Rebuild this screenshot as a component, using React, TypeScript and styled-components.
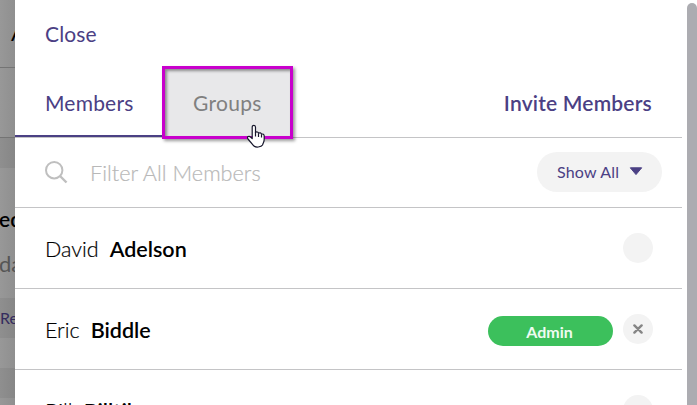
import React from "react";
import styled, { createGlobalStyle } from "styled-components";

const GlobalStyle = createGlobalStyle`
  *, *::before, *::after { box-sizing: border-box; }
  body { margin: 0; overflow: hidden; font-family: Lato, "Liberation Sans", sans-serif; background: #fff; }
  button { font: inherit; border: 0; background: none; padding: 0; }
`;

const Screen = styled.div`
  display: flex;
  width: 697px;
  height: 405px;
  overflow: hidden;
  background: #fff;
`;

const PageBehind = styled.aside`
  flex: 0 0 15px;
  overflow: hidden;
  white-space: nowrap;
  background: linear-gradient(90deg, #989898, #8f8f8f);
`;

const BehindBand = styled.div<{ $h: number; $dark?: boolean; $line?: boolean }>`
  height: ${(p) => p.$h}px;
  overflow: hidden;
  background: ${(p) => (p.$dark ? "linear-gradient(90deg, #8f8f8f, #868686)" : "none")};
  border-bottom: ${(p) => (p.$line ? "1px solid #747474" : "0")};
`;

const BehindText = styled.div<{ $top: number; $left: number; $color: string; $size: number; $weight: number }>`
  padding-top: ${(p) => p.$top}px;
  margin-left: ${(p) => p.$left}px;
  color: ${(p) => p.$color};
  font-size: ${(p) => p.$size}px;
  font-weight: ${(p) => p.$weight};
  line-height: 24px;
`;

const Drawer = styled.main`
  flex: 0 0 667px;
  overflow: hidden;
`;

const TopBar = styled.header`
  height: 67px;
  padding: 20px 0 0 30px;
`;

const TextButton = styled.button<{ $strong?: boolean; $spacing?: number }>`
  display: block;
  color: #4b4084;
  font-size: 21px;
  line-height: 28px;
  font-weight: ${(p) => (p.$strong ? 600 : 400)};
  letter-spacing: ${(p) => p.$spacing ?? 0}px;
`;

const TabBar = styled.nav`
  display: flex;
  height: 71px;
  border-bottom: 1px solid #c4c4c6;
`;

const Tab = styled.button<{ $active?: boolean }>`
  width: ${(p) => (p.$active ? 147 : 131)}px;
  height: 70px;
  padding: 3px 0 0 ${(p) => (p.$active ? 30 : 28)}px;
  text-align: left;
  color: ${(p) => (p.$active ? "#4b4084" : "#808080")};
  font-size: 21px;
  letter-spacing: 0.2px;
  border-bottom: ${(p) => (p.$active ? "2px solid #4b4084" : "0")};
`;

const HighlightedTab = styled(Tab)`
  position: relative;
  height: 73px;
  margin-top: -1px;
  padding-top: 0;
  letter-spacing: 0.3px;
  background: #e8e8ea;
  border: 3px solid #c800cc;
  box-shadow: 2px 2px 3px rgba(0, 0, 0, 0.4), inset 2px 2px 3px rgba(0, 0, 0, 0.4);
`;

const Pointer = styled.svg`
  position: absolute;
  left: 81px;
  top: 55px;
  overflow: visible;
`;

const InviteSlot = styled.div`
  margin-left: auto;
  padding: 22px 30px 0 0;
`;

const FilterBar = styled.div`
  display: flex;
  align-items: center;
  height: 70px;
  padding: 0 20px 0 30px;
  border-bottom: 1px solid #c4c4c6;
`;

const FilterText = styled.span`
  margin: 0 auto 0 22px;
  color: #b8b8b8;
  font-size: 21.7px;
  font-weight: 300;
  -webkit-text-stroke: 0.2px currentColor;
`;

const ShowAll = styled.button`
  display: flex;
  align-items: center;
  width: 125px;
  height: 40px;
  margin-top: -2px;
  padding: 0 0 0 20px;
  gap: 10px;
  border-radius: 20px;
  color: #4b4084;
  background: #f3f3f3;
  font-size: 16px;
  letter-spacing: 0.2px;
`;

const MemberRow = styled.div`
  display: flex;
  align-items: center;
  height: 81px;
  padding: 0 29px 0 30px;
  border-bottom: 1px solid #c4c4c6;
`;

const Name = styled.div`
  display: flex;
  gap: 11px;
  margin: 1px auto 0 0;
  color: #000;
  font-size: 21.5px;
  font-weight: 300;
  -webkit-text-stroke: 0.2px currentColor;
`;

const LastName = styled.span`
  font-weight: 600;
  -webkit-text-stroke: 0;
`;

const AdminBadge = styled.span`
  width: 125px;
  height: 30px;
  margin: 4px 10px 0 0;
  padding-right: 2px;
  border-radius: 15px;
  background: #3cc05c;
  color: #eefbf1;
  font-size: 16px;
  font-weight: 700;
  line-height: 31px;
  text-align: center;
`;

const RoundButton = styled.button`
  display: flex;
  align-items: center;
  justify-content: center;
  width: 30px;
  height: 30px;
  border-radius: 50%;
  background: #f3f3f3;
`;

const ScrollTrack = styled.div`
  flex: 0 0 15px;
  padding: 3px 0 0 5px;
`;

const ScrollThumb = styled.div`
  height: 402px;
  border-radius: 5px 5px 0 0;
  background: #acacb1;
`;

const members = [
  { first: "David", last: "Adelson", admin: false },
  { first: "Eric", last: "Biddle", admin: true },
  { first: "Bill", last: "Billtil", admin: false },
];

function HandCursor() {
  return (
    <Pointer width="20" height="25" viewBox="0 0 20 25">
      <path
        d="M6.2 14.5V3.2C6.2 .7 9.5.7 9.5 3.2V8.4C10.6 7.5 12.2 8 12.5 9.2C13.7 8.4 15.2 8.9 15.5 10.2C16.9 9.6 18.2 10.5 18.2 12V15.5C18.2 18 17 19.2 16.5 21C15.5 23 9.2 24.2 7.3 21.4L2 15C.4 12.8 3 11.5 4.5 13Z"
        fill="#fff"
        stroke="#17172c"
        strokeWidth="1.2"
        strokeLinejoin="round"
      />
      <path d="M9.5 8V12.5M12.5 9.2V13M15.5 10.2V13.5" fill="none" stroke="#17172c" strokeWidth="1.2" />
    </Pointer>
  );
}

export default function App() {
  return (
    <>
      <GlobalStyle />
      <Screen>
        <PageBehind>
          <BehindBand $h={68} $line>
            <BehindText $top={21} $left={11} $color="#000" $size={22} $weight={400}>A</BehindText>
          </BehindBand>
          <BehindBand $h={70} $line />
          <BehindBand $h={30} $dark />
          <BehindBand $h={130}>
            <BehindText $top={39} $left={-1} $color="#000" $size={21} $weight={600}>ed</BehindText>
            <BehindText $top={21} $left={-1} $color="#555" $size={22} $weight={400}>da</BehindText>
          </BehindBand>
          <BehindBand $h={40} $dark>
            <BehindText $top={8} $left={0} $color="#352c5e" $size={16} $weight={400}>Re</BehindText>
          </BehindBand>
          <BehindBand $h={30} />
          <BehindBand $h={30} $dark />
          <BehindBand $h={7} />
        </PageBehind>
        <Drawer>
          <TopBar>
            <TextButton $spacing={0.1}>Close</TextButton>
          </TopBar>
          <TabBar>
            <Tab $active>Members</Tab>
            <HighlightedTab>
              Groups
              <HandCursor />
            </HighlightedTab>
            <InviteSlot>
              <TextButton $strong $spacing={0.2}>Invite Members</TextButton>
            </InviteSlot>
          </TabBar>
          <FilterBar>
            <svg width="23" height="23" viewBox="0 0 23 23" fill="none" stroke="#bfbfbf" strokeWidth="2">
              <circle cx="9.2" cy="9.2" r="8.2" />
              <path d="m15 15 6.5 6.5" strokeWidth="2.4" />
            </svg>
            <FilterText>Filter All Members</FilterText>
            <ShowAll>
              Show All
              <svg width="14" height="9" viewBox="0 0 14 9">
                <path d="M1.3.8H12.7L7 7.6Z" fill="#4b4084" stroke="#4b4084" strokeLinejoin="round" />
              </svg>
            </ShowAll>
          </FilterBar>
          {members.map((m) => (
            <MemberRow key={m.last}>
              <Name>
                <span>{m.first}</span>
                <LastName>{m.last}</LastName>
              </Name>
              {m.admin && <AdminBadge>Admin</AdminBadge>}
              <RoundButton>
                {m.admin && (
                  <svg width="10" height="10" viewBox="0 0 10 10" stroke="#858585" strokeWidth="2.4" strokeLinecap="round">
                    <path d="m1.4 1.4 7.2 7.2M8.6 1.4 1.4 8.6" />
                  </svg>
                )}
              </RoundButton>
            </MemberRow>
          ))}
        </Drawer>
        <ScrollTrack>
          <ScrollThumb />
        </ScrollTrack>
      </Screen>
    </>
  );
}
